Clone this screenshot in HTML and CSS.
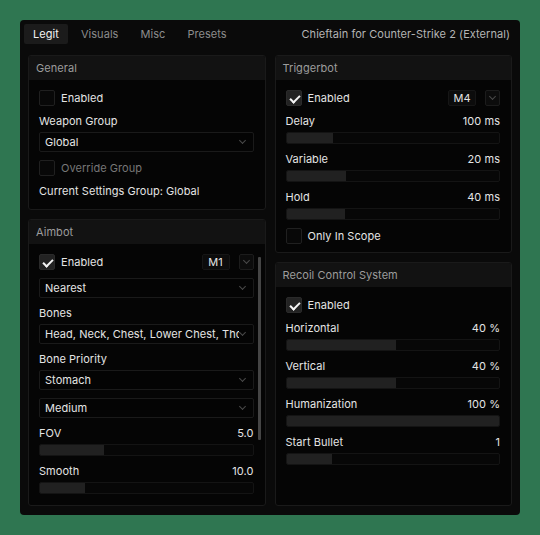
FILE: index.html
```html
<!DOCTYPE html>
<html lang="en">
<head>
  <meta charset="UTF-8" />
  <title>Chieftain</title>
  <link rel="stylesheet" href="styles.css">
</head>
<body>
  <div class="window">
    <div class="tabbar">
      <div class="tab active">Legit</div>
      <div class="tab">Visuals</div>
      <div class="tab">Misc</div>
      <div class="tab">Presets</div>
      <div class="title">Chieftain for Counter-Strike 2 (External)</div>
    </div>

    <div class="columns">
      <!-- Left column -->
      <div class="column">
        <div class="panel">
          <div class="panel-header">General</div>
          <div class="panel-body tall">
            <div class="check"><span class="box"></span>Enabled</div>
            <div class="group">
              <div class="label">Weapon Group</div>
              <div class="select">Global<span class="chev"></span></div>
            </div>
            <div class="check disabled"><span class="box"></span>Override Group</div>
            <div class="label">Current Settings Group: Global</div>
          </div>
        </div>

        <div class="panel grow">
          <div class="panel-header">Aimbot</div>
          <div class="panel-body">
            <div class="check-row">
              <div class="check"><span class="box on"></span>Enabled</div>
              <div class="key">M1</div>
              <div class="key-drop"><span class="chev"></span></div>
            </div>
            <div class="select">Nearest<span class="chev"></span></div>
            <div class="group">
              <div class="label">Bones</div>
              <div class="select"><span class="clip">Head, Neck, Chest, Lower Chest, Thorax, Stomach</span><span class="chev"></span></div>
            </div>
            <div class="group">
              <div class="label">Bone Priority</div>
              <div class="select">Stomach<span class="chev"></span></div>
            </div>
            <div class="select">Medium<span class="chev"></span></div>
            <div class="group">
              <div class="label">FOV<span>5.0</span></div>
              <div class="slider"><div class="fill" style="width: 64px"></div></div>
            </div>
            <div class="group">
              <div class="label">Smooth<span>10.0</span></div>
              <div class="slider"><div class="fill" style="width: 45px"></div></div>
            </div>
            <div class="scrollbar"></div>
          </div>
        </div>
      </div>

      <!-- Right column -->
      <div class="column">
        <div class="panel">
          <div class="panel-header">Triggerbot</div>
          <div class="panel-body">
            <div class="check-row">
              <div class="check"><span class="box on"></span>Enabled</div>
              <div class="key">M4</div>
              <div class="key-drop"><span class="chev"></span></div>
            </div>
            <div class="group">
              <div class="label">Delay<span>100 ms</span></div>
              <div class="slider"><div class="fill" style="width: 46px"></div></div>
            </div>
            <div class="group">
              <div class="label">Variable<span>20 ms</span></div>
              <div class="slider"><div class="fill" style="width: 59px"></div></div>
            </div>
            <div class="group">
              <div class="label">Hold<span>40 ms</span></div>
              <div class="slider"><div class="fill" style="width: 58px"></div></div>
            </div>
            <div class="check"><span class="box"></span>Only In Scope</div>
          </div>
        </div>

        <div class="panel grow">
          <div class="panel-header">Recoil Control System</div>
          <div class="panel-body">
            <div class="check"><span class="box on"></span>Enabled</div>
            <div class="group">
              <div class="label">Horizontal<span>40 %</span></div>
              <div class="slider"><div class="fill" style="width: 109px"></div></div>
            </div>
            <div class="group">
              <div class="label">Vertical<span>40 %</span></div>
              <div class="slider"><div class="fill" style="width: 109px"></div></div>
            </div>
            <div class="group">
              <div class="label">Humanization<span>100 %</span></div>
              <div class="slider"><div class="fill" style="width: 100%"></div></div>
            </div>
            <div class="group">
              <div class="label">Start Bullet<span>1</span></div>
              <div class="slider"><div class="fill" style="width: 45px"></div></div>
            </div>
          </div>
        </div>
      </div>
    </div>
  </div>
</body>
</html>
```

FILE: styles.css
```css
* {
  box-sizing: border-box;
  margin: 0;
  padding: 0;
}

body {
  background: #2f7651;
  padding: 20px;
  font-family: Inter, 'Noto Sans', sans-serif;
  font-size: 11px;
  letter-spacing: 0.05px;
  color: #e4e4e4;
}

.window {
  width: 500px;
  height: 495px;
  background: #0a0a0a;
  border-radius: 4px;
  padding: 4px 8px 9px 8px;
  display: flex;
  flex-direction: column;
}

.tabbar {
  display: flex;
  align-items: center;
  gap: 4px;
  height: 20px;
  margin: 0 0 11px -4px;
}

.tab {
  height: 20px;
  line-height: 20px;
  padding: 0 9px;
  color: #8c8c8c;
  border-radius: 2px;
}

.tab.active {
  background: #1b1b1b;
  color: #f2f2f2;
}

.title {
  margin-left: auto;
  color: #b4b4b4;
  padding-right: 2px;
}

.columns {
  flex: 1;
  display: grid;
  grid-template-columns: 1fr 1fr;
  gap: 9px;
}

.column {
  display: flex;
  flex-direction: column;
  gap: 9px;
}

.panel {
  background: #050505;
  border: 1px solid #1a1a1a;
  border-radius: 3px;
  overflow: hidden;
}

.panel.grow {
  flex: 1;
}

.panel-header {
  height: 24px;
  line-height: 24px;
  background: #121212;
  color: #9c9c9c;
  padding-left: 7px;
}

.panel-body {
  position: relative;
  padding: 10px 11px 8px 10px;
  display: flex;
  flex-direction: column;
  gap: 8px;
}

.panel-body.tall {
  padding-bottom: 11px;
}

.group {
  display: flex;
  flex-direction: column;
  gap: 4px;
}

.label {
  height: 14px;
  line-height: 14px;
  display: flex;
  justify-content: space-between;
}

.check {
  display: flex;
  align-items: center;
  gap: 6px;
  height: 16px;
}

.check.disabled {
  color: #777;
}

.box {
  width: 16px;
  height: 16px;
  border: 1px solid #202020;
  background: #080808;
  border-radius: 2px;
}

.box.on {
  background: #232323;
  border-color: #2a2a2a;
  position: relative;
}

.box.on::after {
  content: "";
  position: absolute;
  left: 5px;
  top: 2px;
  width: 4px;
  height: 8px;
  border: solid #f4f4f4;
  border-width: 0 2px 2px 0;
  transform: rotate(45deg);
}

.check-row {
  display: flex;
  align-items: center;
  height: 16px;
}

.check-row .check {
  flex: 1;
}

.key {
  width: 28px;
  height: 16px;
  line-height: 15px;
  text-align: center;
  background: #0c0c0c;
  border: 1px solid #161616;
  border-radius: 2px;
  margin-right: 9px;
}

.key-drop {
  width: 15px;
  height: 16px;
  background: #0c0c0c;
  border: 1px solid #1c1c1c;
  border-radius: 2px;
  display: flex;
  align-items: center;
  justify-content: center;
}

.select {
  height: 20px;
  line-height: 18px;
  border: 1px solid #1a1a1a;
  background: #040404;
  border-radius: 2px;
  padding: 0 5px;
  display: flex;
  align-items: center;
  justify-content: space-between;
}

.clip {
  overflow: hidden;
  white-space: nowrap;
  width: 194px;
}

.chev {
  width: 5px;
  height: 5px;
  border: solid #4a4a4a;
  border-width: 0 1px 1px 0;
  transform: rotate(45deg);
  margin: -3px 3px 0 0;
  flex-shrink: 0;
}

.key-drop .chev {
  margin: -3px 0 0 0;
}

.slider {
  height: 12px;
  border: 1px solid #141414;
  background: #070707;
  border-radius: 2px;
  overflow: hidden;
}

.fill {
  height: 100%;
  background: #212121;
}

.scrollbar {
  position: absolute;
  right: 4px;
  top: 13px;
  width: 3px;
  height: 183px;
  background: #454545;
  border-radius: 1px;
}
```
